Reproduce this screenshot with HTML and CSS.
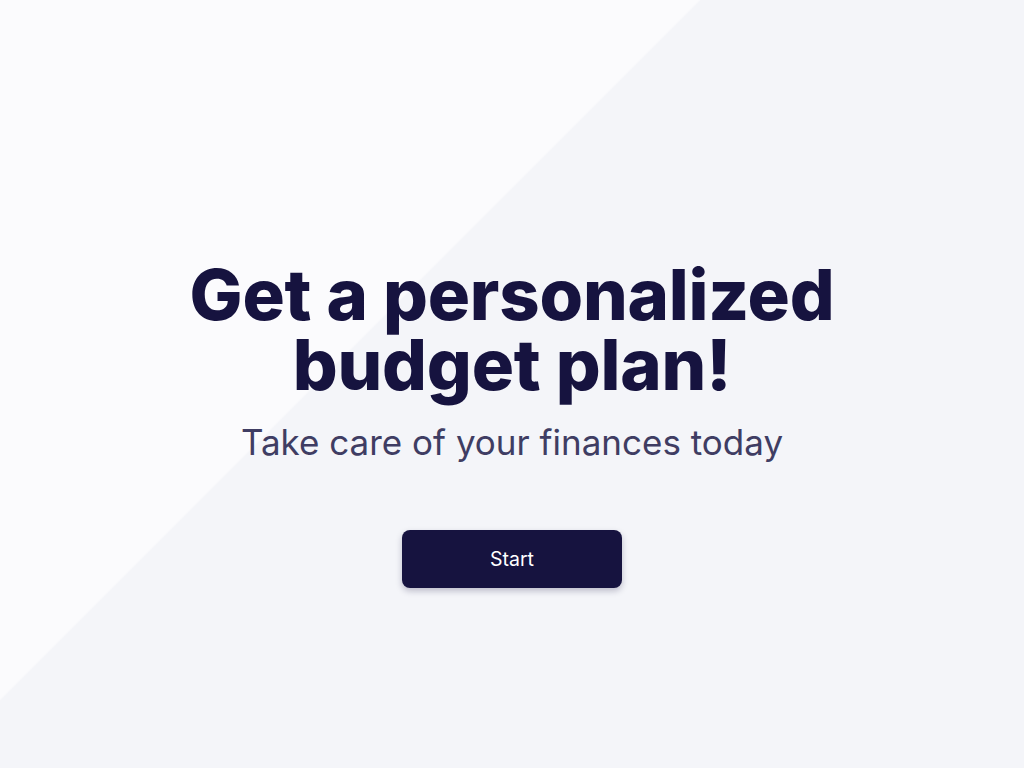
FILE: index.html
```html
<!DOCTYPE html>
<html lang="en">
<head>
<meta charset="utf-8">
<title>Budget plan</title>
<link rel="stylesheet" href="styles.css">
</head>
<body>
<main class="hero">
  <h1 class="title">Get a personalized<br>budget plan!</h1>
  <p class="subtitle">Take care of your finances today</p>
  <button class="start">Start</button>
</main>
</body>
</html>
```

FILE: styles.css
```css
html, body {
  margin: 0;
  padding: 0;
  height: 100%;
}
body {
  font-family: Inter, "Noto Sans", sans-serif;
  background: linear-gradient(135deg, #fbfbfd 0, #fbfbfd 494px, #f4f5f9 496px, #f4f5f9 100%);
}
.hero {
  height: 768px;
  display: flex;
  flex-direction: column;
  align-items: center;
  box-sizing: border-box;
  padding-top: 260px;
}
.title {
  margin: 0;
  font-size: 70.5px;
  line-height: 70px;
  font-weight: 800;
  color: #16133f;
  text-align: center;
  letter-spacing: -0.2px;
}
.subtitle {
  margin: 20px 0 0;
  font-size: 35px;
  line-height: 44px;
  font-weight: 400;
  color: #3f3d63;
}
.start {
  margin-top: 66px;
  width: 220px;
  height: 58px;
  border: none;
  border-radius: 8px;
  background: #16133f;
  color: #ffffff;
  font-family: Inter, "Noto Sans", sans-serif;
  font-size: 19.5px;
  box-shadow: 0 3px 6px rgba(22, 19, 63, 0.25);
  cursor: pointer;
}
```
